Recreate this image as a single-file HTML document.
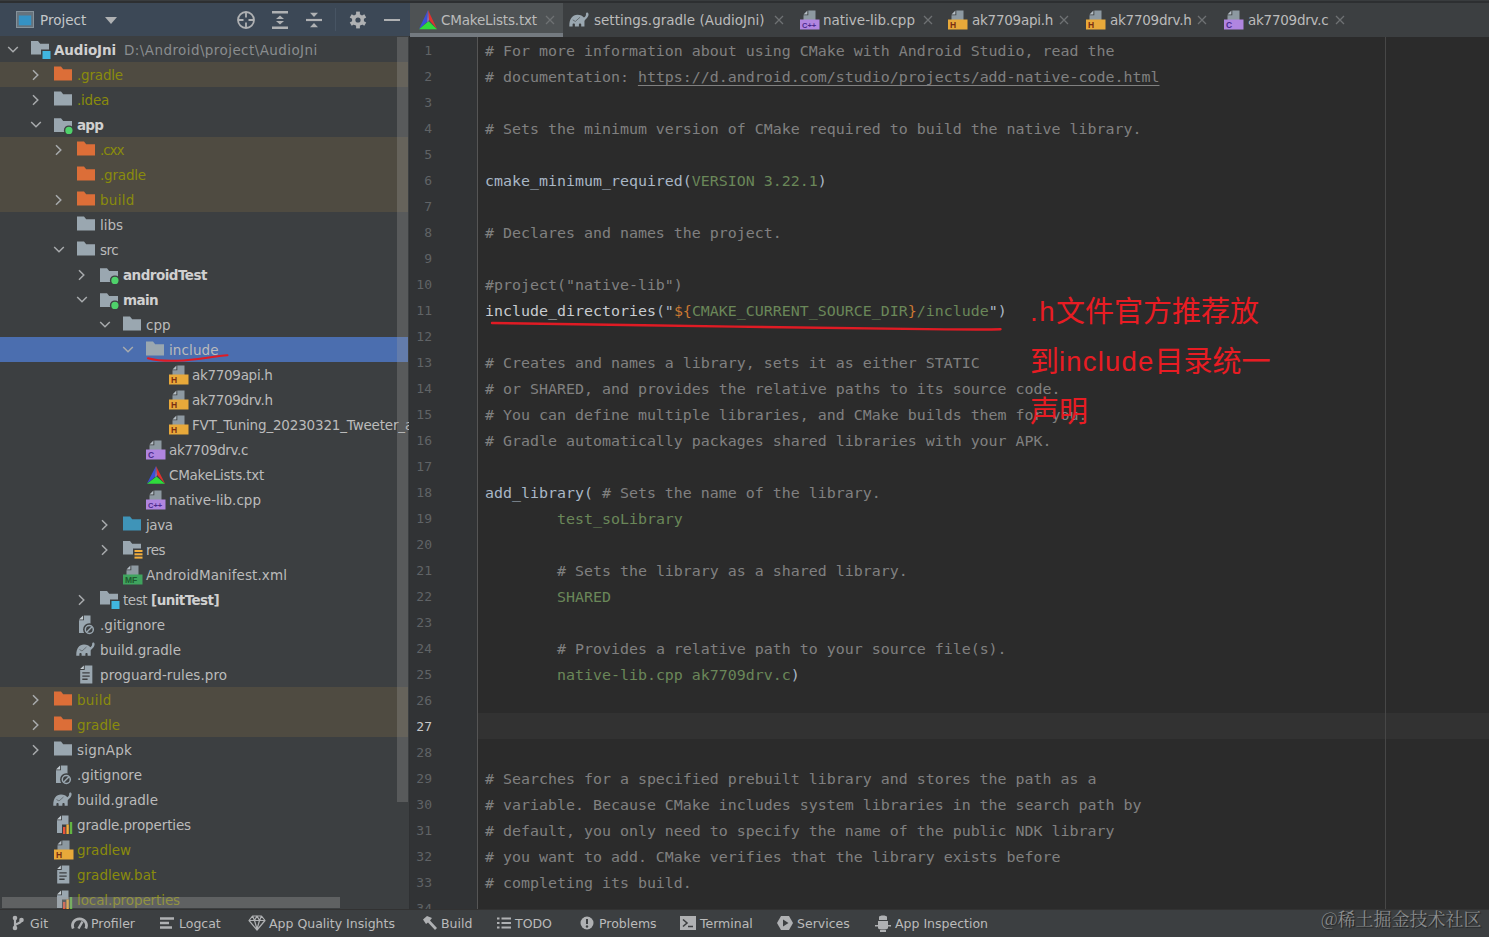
<!DOCTYPE html>
<html><head><meta charset="utf-8"><title>AudioJni – CMakeLists.txt</title>
<style>
html,body{margin:0;padding:0;background:#2b2b2b;}
body{width:1489px;height:937px;position:relative;overflow:hidden;font-family:"DejaVu Sans","Liberation Sans","Noto Sans CJK SC",sans-serif;font-size:13.5px;color:#bbbbbb;}
#topline{position:absolute;left:0;top:0;width:1489px;height:3px;background:#2d2f31;border-top:1px solid #393c3e;box-sizing:border-box;}
#proj{position:absolute;left:0;top:3px;width:409px;height:907px;background:#3c3f41;overflow:hidden;}
#phead{position:absolute;left:0;top:3px;width:410px;height:33px;background:#3c4856;}
#phead .t{position:absolute;left:40px;top:0;line-height:35px;font-size:13.5px;color:#c4c7c9;}
.row{position:absolute;left:0;width:408px;height:25px;white-space:nowrap;}
.row .chev{position:absolute;}
.row .icw{position:absolute;top:0;height:25px;display:flex;align-items:center;}
.row .lbl{position:absolute;top:0;line-height:26px;white-space:pre;}
.row b{font-weight:700;letter-spacing:-0.55px;color:#d0d0d0;}
.path{color:#8a8d8f;margin-left:8px;letter-spacing:.42px;}
.ic{display:block;}
#vsb{position:absolute;left:397px;top:37px;width:11px;height:765px;background:rgba(160,160,160,.28);}
#hsb{position:absolute;left:2px;top:897px;width:338px;height:11px;background:rgba(160,160,160,.35);}
#split{position:absolute;left:409px;top:37px;width:1px;height:873px;background:#2f3133;}
#tabs{position:absolute;left:410px;top:3px;width:1079px;height:34px;background:#3c3f41;}
#tabsel{position:absolute;left:410px;top:3px;width:153px;height:34px;background:#4e5254;}
#tabul{position:absolute;left:410px;top:33px;width:153px;height:4px;background:#747a80;}
.tic{position:absolute;top:4.5px;height:31px;display:flex;align-items:center;}
.tlbl{position:absolute;top:3px;line-height:34px;white-space:pre;color:#bbbbbb;font-size:13.5px;}
#gutter{position:absolute;left:410px;top:37px;width:67px;height:873px;background:#313335;}
#gline{position:absolute;left:477px;top:37px;width:1px;height:873px;background:#555555;}
#editor{position:absolute;left:478px;top:37px;width:1011px;height:873px;background:#2b2b2b;}
#caret{position:absolute;left:478px;top:713px;width:1011px;height:26px;background:#323232;}
#margin{position:absolute;left:1385px;top:37px;width:1px;height:873px;background:#474747;}
.ln{position:absolute;left:410px;width:22px;text-align:right;line-height:26px;height:26px;font-family:"DejaVu Sans Mono","Liberation Mono",monospace;font-size:13px;color:#606366;}
.ln.cur{color:#c8c8c8;}
.cl{position:absolute;left:485px;line-height:26px;height:26px;white-space:pre;font-family:"DejaVu Sans Mono","Liberation Mono",monospace;font-size:14.95px;color:#a9b7c6;}
.cm{color:#808080;} .st{color:#6a8759;} .or{color:#cc7832;} .fn{color:#c8ccd0;}
.lk{text-decoration:underline;text-underline-offset:3px;}
.ann{position:absolute;left:1030px;font-family:"Liberation Sans","Noto Sans CJK SC",sans-serif;font-size:29px;color:#e81c23;white-space:pre;line-height:50px;}
.la{font-size:27.5px;position:relative;top:-1px;}
#bottom{position:absolute;left:0;top:910px;width:1489px;height:27px;background:#3c3f41;}
#btop{position:absolute;left:0;top:909px;width:1489px;height:1px;background:#323232;}
.bic{position:absolute;top:909.5px;height:27px;display:flex;align-items:center;}
.blbl{position:absolute;top:910px;line-height:27px;white-space:pre;font-size:12.5px;color:#bbbbbb;}
#wm{position:absolute;left:1321px;top:904px;font-family:"Noto Serif CJK SC","Noto Sans CJK SC",serif;font-size:18px;color:#8a8c8d;white-space:pre;line-height:28px;text-shadow:1px 1px 1px rgba(0,0,0,.5);}
</style></head><body>

<svg width="0" height="0" style="position:absolute">
<defs>
  <symbol id="i-folder" viewBox="0 0 18 15">
    <path d="M0 0.5 H7 L9.2 3.2 H18 V14.5 H0 Z" fill="currentColor"/>
  </symbol>
  <symbol id="i-chev-r" viewBox="0 0 10 12">
    <path d="M2 1.2 L6.8 6 L2 10.8" fill="none" stroke="#a8abad" stroke-width="1.5"/>
  </symbol>
  <symbol id="i-chev-d" viewBox="0 0 12 10">
    <path d="M1.2 2 L6 6.8 L10.8 2" fill="none" stroke="#a8abad" stroke-width="1.5"/>
  </symbol>
  <symbol id="i-file" viewBox="0 0 20 18">
    <path d="M8 1 H15 V10 H3 V6 Z" fill="#9aa7b0" opacity=".85"/>
    <path d="M7 1 V5 H3 Z" fill="#9aa7b0"/>
  </symbol>
</defs>
</svg>

<div id="topline"></div>
<div id="proj"></div>
<div class="row" style="top:37px;"><svg class="chev" style="left:7px;top:8px" width="12" height="10"><use href="#i-chev-d"/></svg><span class="icw" style="left:31px"><svg class="ic" width="22" height="22" viewBox="0 0 22 22" style="position:relative;top:2.2px"><path d="M0 0 H7 L9.2 2.7 H18 V13.5 H0 Z" fill="#9aa7b0"/><rect x="10" y="8.5" width="10.5" height="10.5" fill="#3c3f41"/><rect x="11.5" y="10" width="8" height="8" fill="#40b6e0"/></svg></span><span class="lbl" style="left:54px;color:#bbbbbb"><b style="letter-spacing:-0.11px">AudioJni</b><span class="path">D:\Android\project\AudioJni</span></span></div><div class="row" style="top:62px;background:#4f4b41;"><svg class="chev" style="left:31px;top:7px" width="10" height="12"><use href="#i-chev-r"/></svg><span class="icw" style="left:54px"><svg class="ic" width="18" height="15" style="color:#dc6e38;position:relative;top:-1.5px"><use href="#i-folder"/></svg></span><span class="lbl" style="left:77px;color:#8a8b0c"><span style="letter-spacing:-0.19px">.gradle</span></span></div><div class="row" style="top:87px;"><svg class="chev" style="left:31px;top:7px" width="10" height="12"><use href="#i-chev-r"/></svg><span class="icw" style="left:54px"><svg class="ic" width="18" height="15" style="color:#9aa7b0;position:relative;top:-1.5px"><use href="#i-folder"/></svg></span><span class="lbl" style="left:77px;color:#8a8b0c"><span style="letter-spacing:-0.24px">.idea</span></span></div><div class="row" style="top:112px;"><svg class="chev" style="left:30px;top:8px" width="12" height="10"><use href="#i-chev-d"/></svg><span class="icw" style="left:54px"><svg class="ic" width="22" height="22" viewBox="0 0 22 22" style="position:relative;top:4px"><path d="M0 0.3 H7 L9.2 3 H18 V14 H0 Z" fill="#9aa7b0"/><circle cx="14.9" cy="12.4" r="5" fill="#3c3f41"/><circle cx="14.9" cy="12.4" r="3.6" fill="#4fd26b"/></svg></span><span class="lbl" style="left:77px;color:#bbbbbb"><b style="letter-spacing:-0.81px">app</b></span></div><div class="row" style="top:137px;background:#4f4b41;"><svg class="chev" style="left:54px;top:7px" width="10" height="12"><use href="#i-chev-r"/></svg><span class="icw" style="left:77px"><svg class="ic" width="18" height="15" style="color:#dc6e38;position:relative;top:-1.5px"><use href="#i-folder"/></svg></span><span class="lbl" style="left:100px;color:#8a8b0c"><span style="letter-spacing:-1.05px">.cxx</span></span></div><div class="row" style="top:162px;background:#4f4b41;"><span class="icw" style="left:77px"><svg class="ic" width="18" height="15" style="color:#dc6e38;position:relative;top:-1.5px"><use href="#i-folder"/></svg></span><span class="lbl" style="left:100px;color:#8a8b0c"><span style="letter-spacing:-0.19px">.gradle</span></span></div><div class="row" style="top:187px;background:#4f4b41;"><svg class="chev" style="left:54px;top:7px" width="10" height="12"><use href="#i-chev-r"/></svg><span class="icw" style="left:77px"><svg class="ic" width="18" height="15" style="color:#dc6e38;position:relative;top:-1.5px"><use href="#i-folder"/></svg></span><span class="lbl" style="left:100px;color:#8a8b0c"><span style="letter-spacing:0.26px">build</span></span></div><div class="row" style="top:212px;"><span class="icw" style="left:77px"><svg class="ic" width="18" height="15" style="color:#9aa7b0;position:relative;top:-1.5px"><use href="#i-folder"/></svg></span><span class="lbl" style="left:100px;color:#bbbbbb">libs</span></div><div class="row" style="top:237px;"><svg class="chev" style="left:53px;top:8px" width="12" height="10"><use href="#i-chev-d"/></svg><span class="icw" style="left:77px"><svg class="ic" width="18" height="15" style="color:#9aa7b0;position:relative;top:-1.5px"><use href="#i-folder"/></svg></span><span class="lbl" style="left:100px;color:#bbbbbb"><span style="letter-spacing:-0.57px">src</span></span></div><div class="row" style="top:262px;"><svg class="chev" style="left:77px;top:7px" width="10" height="12"><use href="#i-chev-r"/></svg><span class="icw" style="left:100px"><svg class="ic" width="22" height="22" viewBox="0 0 22 22" style="position:relative;top:4px"><path d="M0 0.3 H7 L9.2 3 H18 V14 H0 Z" fill="#9aa7b0"/><circle cx="14.9" cy="12.4" r="5" fill="#3c3f41"/><circle cx="14.9" cy="12.4" r="3.6" fill="#4fd26b"/></svg></span><span class="lbl" style="left:123px;color:#bbbbbb"><b style="letter-spacing:-0.52px">androidTest</b></span></div><div class="row" style="top:287px;"><svg class="chev" style="left:76px;top:8px" width="12" height="10"><use href="#i-chev-d"/></svg><span class="icw" style="left:100px"><svg class="ic" width="22" height="22" viewBox="0 0 22 22" style="position:relative;top:4px"><path d="M0 0.3 H7 L9.2 3 H18 V14 H0 Z" fill="#9aa7b0"/><circle cx="14.9" cy="12.4" r="5" fill="#3c3f41"/><circle cx="14.9" cy="12.4" r="3.6" fill="#4fd26b"/></svg></span><span class="lbl" style="left:123px;color:#bbbbbb"><b style="letter-spacing:-0.61px">main</b></span></div><div class="row" style="top:312px;"><svg class="chev" style="left:99px;top:8px" width="12" height="10"><use href="#i-chev-d"/></svg><span class="icw" style="left:123px"><svg class="ic" width="18" height="15" style="color:#9aa7b0;position:relative;top:-1.5px"><use href="#i-folder"/></svg></span><span class="lbl" style="left:146px;color:#bbbbbb">cpp</span></div><div class="row" style="top:337px;background:#4b6eaf;"><svg class="chev" style="left:122px;top:8px" width="12" height="10"><use href="#i-chev-d"/></svg><span class="icw" style="left:146px"><svg class="ic" width="18" height="15" style="color:#9aa7b0;position:relative;top:-1.5px"><use href="#i-folder"/></svg></span><span class="lbl" style="left:169px;color:#bbbbbb"><span style="letter-spacing:0.1px">include</span></span></div><div class="row" style="top:362px;"><span class="icw" style="left:169px"><svg class="ic" width="20" height="20" viewBox="0 0 20 20"><path d="M8.3 0.5 H15.5 V10 H3.5 V5.3 H8.3 Z" fill="#8d99a1"/><path d="M7.4 0.5 V4.4 H3.5 Z" fill="#b4bec5"/><rect x="0" y="9.5" width="19.5" height="10" fill="#e8a93a"/><text x="2" y="18" font-family="Liberation Sans, sans-serif" font-weight="700" font-size="8.5" fill="#7a2e12">H</text></svg></span><span class="lbl" style="left:192px;color:#bbbbbb"><span style="letter-spacing:-0.3px">ak7709api.h</span></span></div><div class="row" style="top:387px;"><span class="icw" style="left:169px"><svg class="ic" width="20" height="20" viewBox="0 0 20 20"><path d="M8.3 0.5 H15.5 V10 H3.5 V5.3 H8.3 Z" fill="#8d99a1"/><path d="M7.4 0.5 V4.4 H3.5 Z" fill="#b4bec5"/><rect x="0" y="9.5" width="19.5" height="10" fill="#e8a93a"/><text x="2" y="18" font-family="Liberation Sans, sans-serif" font-weight="700" font-size="8.5" fill="#7a2e12">H</text></svg></span><span class="lbl" style="left:192px;color:#bbbbbb"><span style="letter-spacing:-0.34px">ak7709drv.h</span></span></div><div class="row" style="top:412px;"><span class="icw" style="left:169px"><svg class="ic" width="20" height="20" viewBox="0 0 20 20"><path d="M8.3 0.5 H15.5 V10 H3.5 V5.3 H8.3 Z" fill="#8d99a1"/><path d="M7.4 0.5 V4.4 H3.5 Z" fill="#b4bec5"/><rect x="0" y="9.5" width="19.5" height="10" fill="#e8a93a"/><text x="2" y="18" font-family="Liberation Sans, sans-serif" font-weight="700" font-size="8.5" fill="#7a2e12">H</text></svg></span><span class="lbl" style="left:192px;color:#bbbbbb"><span style="letter-spacing:-0.18px">FVT_Tuning_20230321_Tweeter_and_Woofer.h</span></span></div><div class="row" style="top:437px;"><span class="icw" style="left:146px"><svg class="ic" width="20" height="20" viewBox="0 0 20 20"><path d="M8.3 0.5 H15.5 V10 H3.5 V5.3 H8.3 Z" fill="#8d99a1"/><path d="M7.4 0.5 V4.4 H3.5 Z" fill="#b4bec5"/><rect x="0" y="9.5" width="19.5" height="10" fill="#b085e0"/><text x="2" y="18" font-family="Liberation Sans, sans-serif" font-weight="700" font-size="8.5" fill="#4a2a8c">C</text></svg></span><span class="lbl" style="left:169px;color:#bbbbbb"><span style="letter-spacing:-0.38px">ak7709drv.c</span></span></div><div class="row" style="top:462px;"><span class="icw" style="left:146px"><svg class="ic" width="20" height="20" viewBox="0 0 20 20" preserveAspectRatio="none"><path d="M10 1 L1 18.5 L9 12 Z" fill="#3a4fd8"/><path d="M10 1 L19 18.5 L11 10 Z" fill="#e0322e"/><path d="M1 18.8 L19 18.8 L10.5 11.5 Z" fill="#2fdc3c"/><path d="M10 1 L9 12 L10.5 11.5 L11 10 Z" fill="#8c6fc0"/></svg></span><span class="lbl" style="left:169px;color:#bbbbbb"><span style="letter-spacing:-0.25px">CMakeLists.txt</span></span></div><div class="row" style="top:487px;"><span class="icw" style="left:146px"><svg class="ic" width="20" height="20" viewBox="0 0 20 20"><path d="M8.3 0.5 H15.5 V10 H3.5 V5.3 H8.3 Z" fill="#8d99a1"/><path d="M7.4 0.5 V4.4 H3.5 Z" fill="#b4bec5"/><rect x="0" y="9.5" width="19.5" height="10" fill="#b085e0"/><text x="2" y="18" font-family="Liberation Sans, sans-serif" font-weight="700" font-size="7.5" fill="#4a2a8c">C++</text></svg></span><span class="lbl" style="left:169px;color:#bbbbbb">native-lib.cpp</span></div><div class="row" style="top:512px;"><svg class="chev" style="left:100px;top:7px" width="10" height="12"><use href="#i-chev-r"/></svg><span class="icw" style="left:123px"><svg class="ic" width="18" height="15" style="color:#3f94b8;position:relative;top:-1.5px"><use href="#i-folder"/></svg></span><span class="lbl" style="left:146px;color:#bbbbbb"><span style="letter-spacing:-0.42px">java</span></span></div><div class="row" style="top:537px;"><svg class="chev" style="left:100px;top:7px" width="10" height="12"><use href="#i-chev-r"/></svg><span class="icw" style="left:123px"><svg class="ic" width="22" height="22" viewBox="0 0 22 22" style="position:relative;top:2.2px"><path d="M0 0 H7 L9.2 2.7 H18 V13.5 H0 Z" fill="#9aa7b0"/><rect x="10" y="7.5" width="10.5" height="12" fill="#3c3f41"/><rect x="11.5" y="9" width="8" height="2" fill="#f4af3d"/><rect x="11.5" y="12.3" width="8" height="2" fill="#f4af3d"/><rect x="11.5" y="15.6" width="8" height="2" fill="#f4af3d"/></svg></span><span class="lbl" style="left:146px;color:#bbbbbb"><span style="letter-spacing:-0.53px">res</span></span></div><div class="row" style="top:562px;"><span class="icw" style="left:123px"><svg class="ic" width="20" height="20" viewBox="0 0 20 20"><path d="M8.3 0.5 H15.5 V10 H3.5 V5.3 H8.3 Z" fill="#8d99a1"/><path d="M7.4 0.5 V4.4 H3.5 Z" fill="#b4bec5"/><rect x="0" y="9.5" width="19.5" height="10" fill="#3fa45e"/><text x="2" y="18" font-family="Liberation Sans, sans-serif" font-weight="700" font-size="8.5" fill="#1f5a30">MF</text></svg></span><span class="lbl" style="left:146px;color:#bbbbbb"><span style="letter-spacing:0.11px">AndroidManifest.xml</span></span></div><div class="row" style="top:587px;"><svg class="chev" style="left:77px;top:7px" width="10" height="12"><use href="#i-chev-r"/></svg><span class="icw" style="left:100px"><svg class="ic" width="22" height="22" viewBox="0 0 22 22" style="position:relative;top:2.2px"><path d="M0 0 H7 L9.2 2.7 H18 V13.5 H0 Z" fill="#9aa7b0"/><rect x="10" y="8.5" width="10.5" height="10.5" fill="#3c3f41"/><rect x="11.5" y="10" width="8" height="8" fill="#40b6e0"/></svg></span><span class="lbl" style="left:123px;color:#bbbbbb"><span style="letter-spacing:-0.44px">test </span><b style="letter-spacing:-0.57px">[unitTest]</b></span></div><div class="row" style="top:612px;"><span class="icw" style="left:77px"><svg class="ic" width="20" height="20" viewBox="0 0 20 20" style="margin-left:-1px"><path d="M8 0.5 H14.5 V18 H3 V5.3 H8 Z" fill="#9aa7b0"/><path d="M7.1 0.5 V4.4 H3 Z" fill="#c5cdd2"/><circle cx="13.3" cy="14.5" r="6.2" fill="#3c3f41"/><circle cx="13.3" cy="14.5" r="4" fill="none" stroke="#9aa7b0" stroke-width="1.5"/><path d="M10.6 17.2 L16 11.8" stroke="#9aa7b0" stroke-width="1.5"/></svg></span><span class="lbl" style="left:100px;color:#bbbbbb"><span style="letter-spacing:0.04px">.gitignore</span></span></div><div class="row" style="top:637px;"><span class="icw" style="left:77px"><svg class="ic" width="19" height="14.0" viewBox="0 0 19 14" style="margin-top:-1px;margin-left:-1px"><path d="M0.3 13.8 C0 7 3 2.6 8 2.6 C11 2.6 13 3.6 14.2 5.3 C15.5 4.6 16.3 3.3 16.1 2.2 C15.9 1 16.9 0 17.9 0.6 C19.1 1.4 18.7 4 17.1 5.8 C16.1 7 15.1 7.6 14.7 8.6 L14.7 13.8 H11.6 V11.8 C11.6 10.6 9.4 10.6 9.4 11.8 V13.8 H5.6 V11.8 C5.6 10.6 3.4 10.6 3.4 11.8 V13.8 Z" fill="#9aa7b0"/><path d="M3.5 7.5 L6 9 L10.5 5" fill="none" stroke="#3c3f41" stroke-width="0.9" opacity=".6"/></svg></span><span class="lbl" style="left:100px;color:#bbbbbb"><span style="letter-spacing:0.04px">build.gradle</span></span></div><div class="row" style="top:662px;"><span class="icw" style="left:77px"><svg class="ic" width="16" height="19" viewBox="0 0 15 18" style="margin-left:1px"><path d="M6.3 0.5 H13.5 V17.5 H2 V4.8 H6.3 Z" fill="#9aa7b0"/><path d="M5.4 0.5 V3.9 H2 Z" fill="#c5cdd2"/><path d="M4 7.5 H11 M4 10.5 H11 M4 13.5 H9" stroke="#3c3f41" stroke-width="1.3"/></svg></span><span class="lbl" style="left:100px;color:#bbbbbb"><span style="letter-spacing:0.07px">proguard-rules.pro</span></span></div><div class="row" style="top:687px;background:#4f4b41;"><svg class="chev" style="left:31px;top:7px" width="10" height="12"><use href="#i-chev-r"/></svg><span class="icw" style="left:54px"><svg class="ic" width="18" height="15" style="color:#dc6e38;position:relative;top:-1.5px"><use href="#i-folder"/></svg></span><span class="lbl" style="left:77px;color:#8a8b0c"><span style="letter-spacing:0.26px">build</span></span></div><div class="row" style="top:712px;background:#4f4b41;"><svg class="chev" style="left:31px;top:7px" width="10" height="12"><use href="#i-chev-r"/></svg><span class="icw" style="left:54px"><svg class="ic" width="18" height="15" style="color:#dc6e38;position:relative;top:-1.5px"><use href="#i-folder"/></svg></span><span class="lbl" style="left:77px;color:#8a8b0c">gradle</span></div><div class="row" style="top:737px;"><svg class="chev" style="left:31px;top:7px" width="10" height="12"><use href="#i-chev-r"/></svg><span class="icw" style="left:54px"><svg class="ic" width="18" height="15" style="color:#9aa7b0;position:relative;top:-1.5px"><use href="#i-folder"/></svg></span><span class="lbl" style="left:77px;color:#bbbbbb"><span style="letter-spacing:0.21px">signApk</span></span></div><div class="row" style="top:762px;"><span class="icw" style="left:54px"><svg class="ic" width="20" height="20" viewBox="0 0 20 20" style="margin-left:-1px"><path d="M8 0.5 H14.5 V18 H3 V5.3 H8 Z" fill="#9aa7b0"/><path d="M7.1 0.5 V4.4 H3 Z" fill="#c5cdd2"/><circle cx="13.3" cy="14.5" r="6.2" fill="#3c3f41"/><circle cx="13.3" cy="14.5" r="4" fill="none" stroke="#9aa7b0" stroke-width="1.5"/><path d="M10.6 17.2 L16 11.8" stroke="#9aa7b0" stroke-width="1.5"/></svg></span><span class="lbl" style="left:77px;color:#bbbbbb"><span style="letter-spacing:0.04px">.gitignore</span></span></div><div class="row" style="top:787px;"><span class="icw" style="left:54px"><svg class="ic" width="19" height="14.0" viewBox="0 0 19 14" style="margin-top:-1px;margin-left:-1px"><path d="M0.3 13.8 C0 7 3 2.6 8 2.6 C11 2.6 13 3.6 14.2 5.3 C15.5 4.6 16.3 3.3 16.1 2.2 C15.9 1 16.9 0 17.9 0.6 C19.1 1.4 18.7 4 17.1 5.8 C16.1 7 15.1 7.6 14.7 8.6 L14.7 13.8 H11.6 V11.8 C11.6 10.6 9.4 10.6 9.4 11.8 V13.8 H5.6 V11.8 C5.6 10.6 3.4 10.6 3.4 11.8 V13.8 Z" fill="#9aa7b0"/><path d="M3.5 7.5 L6 9 L10.5 5" fill="none" stroke="#3c3f41" stroke-width="0.9" opacity=".6"/></svg></span><span class="lbl" style="left:77px;color:#bbbbbb"><span style="letter-spacing:0.04px">build.gradle</span></span></div><div class="row" style="top:812px;"><span class="icw" style="left:54px"><svg class="ic" width="20" height="20" viewBox="0 0 20 20"><path d="M8 0.5 H14.5 V9.5 H8 V18 H3 V5.3 H8 Z" fill="#9aa7b0"/><path d="M7.1 0.5 V4.4 H3 Z" fill="#c5cdd2"/><rect x="9" y="12" width="2.4" height="7" fill="#e8553a"/><rect x="12.4" y="9.5" width="2.4" height="9.5" fill="#f4af3d"/><rect x="15.8" y="7" width="2.4" height="12" fill="#62b543"/></svg></span><span class="lbl" style="left:77px;color:#bbbbbb"><span style="letter-spacing:-0.13px">gradle.properties</span></span></div><div class="row" style="top:837px;"><span class="icw" style="left:54px"><svg class="ic" width="20" height="20" viewBox="0 0 20 20"><path d="M8.3 0.5 H15.5 V10 H3.5 V5.3 H8.3 Z" fill="#8d99a1"/><path d="M7.4 0.5 V4.4 H3.5 Z" fill="#b4bec5"/><rect x="0" y="9.5" width="19.5" height="10" fill="#e8a93a"/><text x="2" y="18" font-family="Liberation Sans, sans-serif" font-weight="700" font-size="8.5" fill="#7a2e12">H</text></svg></span><span class="lbl" style="left:77px;color:#8a8b0c">gradlew</span></div><div class="row" style="top:862px;"><span class="icw" style="left:54px"><svg class="ic" width="16" height="19" viewBox="0 0 15 18" style="margin-left:1px"><path d="M6.3 0.5 H13.5 V17.5 H2 V4.8 H6.3 Z" fill="#9aa7b0"/><path d="M5.4 0.5 V3.9 H2 Z" fill="#c5cdd2"/><path d="M4 7.5 H11 M4 10.5 H11 M4 13.5 H9" stroke="#3c3f41" stroke-width="1.3"/></svg></span><span class="lbl" style="left:77px;color:#8a8b0c">gradlew.bat</span></div><div class="row" style="top:887px;"><span class="icw" style="left:54px"><svg class="ic" width="20" height="20" viewBox="0 0 20 20"><path d="M8 0.5 H14.5 V9.5 H8 V18 H3 V5.3 H8 Z" fill="#9aa7b0"/><path d="M7.1 0.5 V4.4 H3 Z" fill="#c5cdd2"/><rect x="9" y="12" width="2.4" height="7" fill="#e8553a"/><rect x="12.4" y="9.5" width="2.4" height="9.5" fill="#f4af3d"/><rect x="15.8" y="7" width="2.4" height="12" fill="#62b543"/></svg></span><span class="lbl" style="left:77px;color:#8a8b0c"><span style="letter-spacing:-0.1px">local.properties</span></span></div>
<div id="phead"><svg style="position:absolute;left:16px;top:8px" width="18" height="17" viewBox="0 0 18 17"><rect x="0.5" y="0.5" width="17" height="16" fill="#66737d" stroke="#85929b"/><rect x="2.8" y="4.5" width="12.4" height="9.8" fill="#3592c4"/></svg>
<span class="t">Project</span>
<svg style="position:absolute;left:105px;top:14px" width="12" height="7" viewBox="0 0 12 7"><path d="M0 0 H12 L6 7 Z" fill="#afb1b3"/></svg>
<svg style="position:absolute;left:236px;top:7px" width="20" height="20" viewBox="0 0 20 20"><circle cx="10" cy="10" r="8" fill="none" stroke="#afb1b3" stroke-width="1.8"/><path d="M10 2 V7.5 M10 12.5 V18 M2 10 H7.5 M12.5 10 H18" stroke="#afb1b3" stroke-width="1.8"/></svg>
<svg style="position:absolute;left:272px;top:8px" width="16" height="18" viewBox="0 0 16 18"><path d="M0 1.2 H16 M0 16.8 H16" stroke="#afb1b3" stroke-width="2.4"/><path d="M8 4.5 L12 8 H4 Z M8 13.5 L12 10 H4 Z" fill="#afb1b3"/></svg>
<svg style="position:absolute;left:306px;top:9px" width="16" height="16" viewBox="0 0 16 16"><path d="M0 8 H16" stroke="#afb1b3" stroke-width="2.2"/><path d="M8 5 L12 0.8 H4 Z M8 11 L12 15.2 H4 Z" fill="#afb1b3"/></svg>
<div style="position:absolute;left:335px;top:5px;width:1px;height:23px;background:#475463"></div>
<svg style="position:absolute;left:349px;top:8px" width="18" height="18" viewBox="-9 -9 18 18"><g fill="#afb1b3"><circle r="6"/><rect x="-1.9" y="-8.4" width="3.8" height="16.8"/><rect x="-1.9" y="-8.4" width="3.8" height="16.8" transform="rotate(60)"/><rect x="-1.9" y="-8.4" width="3.8" height="16.8" transform="rotate(120)"/></g><circle r="2.6" fill="#3c4856"/></svg>
<div style="position:absolute;left:384px;top:16px;width:16px;height:2px;background:#afb1b3"></div>
</div>
<div id="vsb"></div><div id="hsb"></div>
<div id="split"></div>
<svg style="position:absolute;left:140px;top:345.7px" width="100" height="16" viewBox="0 0 100 16"><path d="M8 12.3 C20 15.6 40 15.2 58 13 C70 11.4 80 9.8 87.5 9.3" fill="none" stroke="#e01b24" stroke-width="2" stroke-linecap="round"/></svg>

<div id="tabs"></div><div id="tabsel"></div><div id="tabul"></div>
<span class="tic" style="left:418px"><svg class="ic" width="20" height="21.5" viewBox="0 0 20 20" preserveAspectRatio="none"><path d="M10 1 L1 18.5 L9 12 Z" fill="#3a4fd8"/><path d="M10 1 L19 18.5 L11 10 Z" fill="#e0322e"/><path d="M1 18.8 L19 18.8 L10.5 11.5 Z" fill="#2fdc3c"/><path d="M10 1 L9 12 L10.5 11.5 L11 10 Z" fill="#8c6fc0"/></svg></span><span class="tlbl" style="left:441px"><span style="letter-spacing:-.18px">CMakeLists.txt</span></span><svg style="position:absolute;left:545px;top:15px" width="10" height="10" viewBox="0 0 10 10"><path d="M1 1 L9 9 M9 1 L1 9" stroke="#6e7173" stroke-width="1.3"/></svg><span class="tic" style="left:570px"><svg class="ic" width="20" height="14.7" viewBox="0 0 19 14" style="margin-top:-1px;margin-left:-1px"><path d="M0.3 13.8 C0 7 3 2.6 8 2.6 C11 2.6 13 3.6 14.2 5.3 C15.5 4.6 16.3 3.3 16.1 2.2 C15.9 1 16.9 0 17.9 0.6 C19.1 1.4 18.7 4 17.1 5.8 C16.1 7 15.1 7.6 14.7 8.6 L14.7 13.8 H11.6 V11.8 C11.6 10.6 9.4 10.6 9.4 11.8 V13.8 H5.6 V11.8 C5.6 10.6 3.4 10.6 3.4 11.8 V13.8 Z" fill="#9aa7b0"/><path d="M3.5 7.5 L6 9 L10.5 5" fill="none" stroke="#3c3f41" stroke-width="0.9" opacity=".6"/></svg></span><span class="tlbl" style="left:594px">settings.gradle (AudioJni)</span><svg style="position:absolute;left:774px;top:15px" width="10" height="10" viewBox="0 0 10 10"><path d="M1 1 L9 9 M9 1 L1 9" stroke="#6e7173" stroke-width="1.3"/></svg><span class="tic" style="left:800px"><svg class="ic" width="20" height="20" viewBox="0 0 20 20"><path d="M8.3 0.5 H15.5 V10 H3.5 V5.3 H8.3 Z" fill="#8d99a1"/><path d="M7.4 0.5 V4.4 H3.5 Z" fill="#b4bec5"/><rect x="0" y="9.5" width="19.5" height="10" fill="#b085e0"/><text x="2" y="18" font-family="Liberation Sans, sans-serif" font-weight="700" font-size="7.5" fill="#4a2a8c">C++</text></svg></span><span class="tlbl" style="left:823px">native-lib.cpp</span><svg style="position:absolute;left:923px;top:15px" width="10" height="10" viewBox="0 0 10 10"><path d="M1 1 L9 9 M9 1 L1 9" stroke="#6e7173" stroke-width="1.3"/></svg><span class="tic" style="left:948px"><svg class="ic" width="20" height="20" viewBox="0 0 20 20"><path d="M8.3 0.5 H15.5 V10 H3.5 V5.3 H8.3 Z" fill="#8d99a1"/><path d="M7.4 0.5 V4.4 H3.5 Z" fill="#b4bec5"/><rect x="0" y="9.5" width="19.5" height="10" fill="#e8a93a"/><text x="2" y="18" font-family="Liberation Sans, sans-serif" font-weight="700" font-size="8.5" fill="#7a2e12">H</text></svg></span><span class="tlbl" style="left:972px"><span style="letter-spacing:-.26px">ak7709api.h</span></span><svg style="position:absolute;left:1059px;top:15px" width="10" height="10" viewBox="0 0 10 10"><path d="M1 1 L9 9 M9 1 L1 9" stroke="#6e7173" stroke-width="1.3"/></svg><span class="tic" style="left:1086px"><svg class="ic" width="20" height="20" viewBox="0 0 20 20"><path d="M8.3 0.5 H15.5 V10 H3.5 V5.3 H8.3 Z" fill="#8d99a1"/><path d="M7.4 0.5 V4.4 H3.5 Z" fill="#b4bec5"/><rect x="0" y="9.5" width="19.5" height="10" fill="#e8a93a"/><text x="2" y="18" font-family="Liberation Sans, sans-serif" font-weight="700" font-size="8.5" fill="#7a2e12">H</text></svg></span><span class="tlbl" style="left:1110px"><span style="letter-spacing:-.26px">ak7709drv.h</span></span><svg style="position:absolute;left:1197px;top:15px" width="10" height="10" viewBox="0 0 10 10"><path d="M1 1 L9 9 M9 1 L1 9" stroke="#6e7173" stroke-width="1.3"/></svg><span class="tic" style="left:1224px"><svg class="ic" width="20" height="20" viewBox="0 0 20 20"><path d="M8.3 0.5 H15.5 V10 H3.5 V5.3 H8.3 Z" fill="#8d99a1"/><path d="M7.4 0.5 V4.4 H3.5 Z" fill="#b4bec5"/><rect x="0" y="9.5" width="19.5" height="10" fill="#b085e0"/><text x="2" y="18" font-family="Liberation Sans, sans-serif" font-weight="700" font-size="8.5" fill="#4a2a8c">C</text></svg></span><span class="tlbl" style="left:1248px"><span style="letter-spacing:-.26px">ak7709drv.c</span></span><svg style="position:absolute;left:1335px;top:15px" width="10" height="10" viewBox="0 0 10 10"><path d="M1 1 L9 9 M9 1 L1 9" stroke="#6e7173" stroke-width="1.3"/></svg>
<div id="gutter"></div><div id="editor"></div><div id="caret"></div><div id="gline"></div><div id="margin"></div>
<div class="ln" style="top:38px">1</div><div class="ln" style="top:64px">2</div><div class="ln" style="top:90px">3</div><div class="ln" style="top:116px">4</div><div class="ln" style="top:142px">5</div><div class="ln" style="top:168px">6</div><div class="ln" style="top:194px">7</div><div class="ln" style="top:220px">8</div><div class="ln" style="top:246px">9</div><div class="ln" style="top:272px">10</div><div class="ln" style="top:298px">11</div><div class="ln" style="top:324px">12</div><div class="ln" style="top:350px">13</div><div class="ln" style="top:376px">14</div><div class="ln" style="top:402px">15</div><div class="ln" style="top:428px">16</div><div class="ln" style="top:454px">17</div><div class="ln" style="top:480px">18</div><div class="ln" style="top:506px">19</div><div class="ln" style="top:532px">20</div><div class="ln" style="top:558px">21</div><div class="ln" style="top:584px">22</div><div class="ln" style="top:610px">23</div><div class="ln" style="top:636px">24</div><div class="ln" style="top:662px">25</div><div class="ln" style="top:688px">26</div><div class="ln cur" style="top:714px">27</div><div class="ln" style="top:740px">28</div><div class="ln" style="top:766px">29</div><div class="ln" style="top:792px">30</div><div class="ln" style="top:818px">31</div><div class="ln" style="top:844px">32</div><div class="ln" style="top:870px">33</div><div class="ln" style="top:896px">34</div>
<div class="cl" style="top:38px"><span class="cm"># For more information about using CMake with Android Studio, read the</span></div><div class="cl" style="top:64px"><span class="cm"># documentation: </span><span class="cm lk">https://d.android.com/studio/projects/add-native-code.html</span></div><div class="cl" style="top:116px"><span class="cm"># Sets the minimum version of CMake required to build the native library.</span></div><div class="cl" style="top:168px">cmake_minimum_required(<span class="st">VERSION 3.22.1</span>)</div><div class="cl" style="top:220px"><span class="cm"># Declares and names the project.</span></div><div class="cl" style="top:272px"><span class="cm">#project(&quot;native-lib&quot;)</span></div><div class="cl" style="top:298px"><span class="fn">include_directories</span>("<span class="or">${</span><span class="st">CMAKE_CURRENT_SOURCE_DIR</span><span class="or">}</span><span class="st">/include</span>")</div><div class="cl" style="top:350px"><span class="cm"># Creates and names a library, sets it as either STATIC</span></div><div class="cl" style="top:376px"><span class="cm"># or SHARED, and provides the relative paths to its source code.</span></div><div class="cl" style="top:402px"><span class="cm"># You can define multiple libraries, and CMake builds them for you.</span></div><div class="cl" style="top:428px"><span class="cm"># Gradle automatically packages shared libraries with your APK.</span></div><div class="cl" style="top:480px">add_library( <span class="cm"># Sets the name of the library.</span></div><div class="cl" style="top:506px">        <span class="st">test_soLibrary</span></div><div class="cl" style="top:558px">        <span class="cm"># Sets the library as a shared library.</span></div><div class="cl" style="top:584px">        <span class="st">SHARED</span></div><div class="cl" style="top:636px">        <span class="cm"># Provides a relative path to your source file(s).</span></div><div class="cl" style="top:662px">        <span class="st">native-lib.cpp ak7709drv.c</span>)</div><div class="cl" style="top:766px"><span class="cm"># Searches for a specified prebuilt library and stores the path as a</span></div><div class="cl" style="top:792px"><span class="cm"># variable. Because CMake includes system libraries in the search path by</span></div><div class="cl" style="top:818px"><span class="cm"># default, you only need to specify the name of the public NDK library</span></div><div class="cl" style="top:844px"><span class="cm"># you want to add. CMake verifies that the library exists before</span></div><div class="cl" style="top:870px"><span class="cm"># completing its build.</span></div>
<svg style="position:absolute;left:485px;top:315px" width="530" height="20" viewBox="0 0 530 20"><path d="M7 8 C80 9 170 10.5 250 11.6 C330 12.7 400 14 460 14.4 C490 14.6 505 14.7 515.5 14.3" fill="none" stroke="#e01b24" stroke-width="2.4" stroke-linecap="round"/></svg>
<div class="ann" style="top:287px"><span class="la" style="letter-spacing:1.5px">.h</span>文件官方推荐放</div>
<div class="ann" style="top:337px">到<span class="la" style="letter-spacing:1.2px">include</span>目录统一</div>
<div class="ann" style="top:387px">声明</div>
<div id="btop"></div><div id="bottom"></div>
<span class="bic" style="left:12px"><svg width="12" height="16" viewBox="0 0 12 16"><circle cx="3" cy="3" r="2.3" fill="#afb1b3"/><circle cx="3" cy="13" r="2.3" fill="#afb1b3"/><circle cx="9.5" cy="5" r="2.3" fill="#afb1b3"/><path d="M3 3 V13 M9.5 5 C9.5 9 3 8 3 11" stroke="#afb1b3" stroke-width="2.2" fill="none"/></svg></span><span class="blbl" style="left:30px">Git</span><span class="bic" style="left:70px"><svg width="17" height="12" viewBox="0 0 17 12" style="margin-left:1px"><path d="M2.2 11.5 C0 6.5 3.5 1.8 8.5 1.8 C13.5 1.8 17 6.5 14.8 11.5" fill="none" stroke="#afb1b3" stroke-width="2.8"/><path d="M7.5 11.5 L11.5 4.5" stroke="#afb1b3" stroke-width="2.4"/></svg></span><span class="blbl" style="left:91px">Profiler</span><span class="bic" style="left:160px"><svg width="15" height="12" viewBox="0 0 15 12"><path d="M0 1.5 H14 M0 6 H9 M0 10.5 H12" stroke="#afb1b3" stroke-width="2.7"/></svg></span><span class="blbl" style="left:179px">Logcat</span><span class="bic" style="left:248px"><svg width="18" height="16" viewBox="0 0 18 16"><path d="M4.5 1 H13.5 L17 5.5 L9 15 L1 5.5 Z M1 5.5 H17 M6.5 5.5 L9 14 L11.5 5.5 M4.5 1 L6.5 5.5 L9 1 L11.5 5.5 L13.5 1" fill="none" stroke="#afb1b3" stroke-width="1.2" stroke-linejoin="round"/></svg></span><span class="blbl" style="left:269px">App Quality Insights</span><span class="bic" style="left:421px"><svg width="17" height="16" viewBox="0 0 17 16"><path d="M2 4.5 L6 1 L11 3 L9 5.5 L16 13 L14 15 L7 7.5 L5 9 Z" fill="#afb1b3"/></svg></span><span class="blbl" style="left:441px">Build</span><span class="bic" style="left:497px"><svg width="14" height="12" viewBox="0 0 14 12"><path d="M0 1.5 H2.5 M4.5 1.5 H14 M0 6 H2.5 M4.5 6 H14 M0 10.5 H2.5 M4.5 10.5 H14" stroke="#afb1b3" stroke-width="2.2"/></svg></span><span class="blbl" style="left:515px">TODO</span><span class="bic" style="left:580px"><svg width="14" height="14" viewBox="0 0 14 14"><circle cx="7" cy="7" r="6.5" fill="#afb1b3"/><path d="M7 3 V8" stroke="#3c3f41" stroke-width="2"/><circle cx="7" cy="10.5" r="1.2" fill="#3c3f41"/></svg></span><span class="blbl" style="left:599px">Problems</span><span class="bic" style="left:680px"><svg width="16" height="14" viewBox="0 0 16 14"><rect x="0" y="0" width="16" height="14" fill="#afb1b3"/><path d="M3 3.5 L7 7 L3 10.5 M8 10.5 H13" stroke="#3c3f41" stroke-width="1.6" fill="none"/></svg></span><span class="blbl" style="left:700px">Terminal</span><span class="bic" style="left:777px"><svg width="16" height="16" viewBox="0 0 16 16"><path d="M4 1 H12 L16 8 L12 15 H4 L0 8 Z" fill="#afb1b3"/><path d="M6 4.5 L11.5 8 L6 11.5 Z" fill="#3c3f41"/></svg></span><span class="blbl" style="left:797px">Services</span><span class="bic" style="left:875px"><svg width="16" height="17" viewBox="0 0 16 17"><path d="M4 2 C4 0 12 0 12 2 V5 H4 Z M3 6 H13 V10 H16 V11.5 H13 V13 C13 15 3 15 3 13 V11.5 H0 V10 H3 Z M5 15 H11 V17 H5 Z" fill="#afb1b3"/></svg></span><span class="blbl" style="left:895px">App Inspection</span>
<div id="wm">@稀土掘金技术社区</div>
</body></html>
